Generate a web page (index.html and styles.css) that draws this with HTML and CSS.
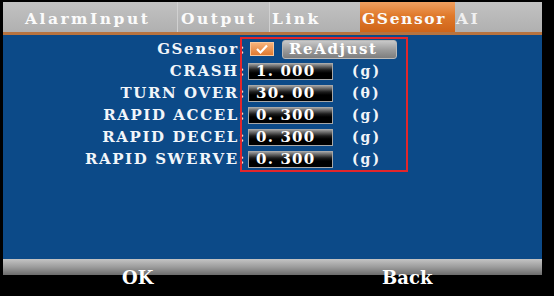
FILE: index.html
```html
<!DOCTYPE html>
<html lang="en">
<head>
    <meta charset="UTF-8">
    <title>GSensor</title>
    <link rel="stylesheet" href="styles.css">
</head>
<body>
    <div class="screen">
        <div class="tabs">
            <div class="tab tab-alarm">AlarmInput</div>
            <div class="tab tab-output">Output</div>
            <div class="tab tab-link">Link</div>
            <div class="tab tab-gsensor active">GSensor</div>
            <div class="tab tab-ai">AI</div>
        </div>

        <div class="panel">
            <div class="form">
                <div class="row">
                    <div class="label">GSensor:</div>
                    <div class="check">
                        <svg width="24" height="14" viewBox="0 0 24 14">
                            <path d="M7 7 L10.5 10.5 L17 3.5" fill="none" stroke="#fff" stroke-width="2.2"/>
                        </svg>
                    </div>
                    <div class="btn">ReAdjust</div>
                </div>
                <div class="row">
                    <div class="label">CRASH:</div>
                    <div class="field">1. 000</div>
                    <div class="unit">(g)</div>
                </div>
                <div class="row">
                    <div class="label">TURN OVER:</div>
                    <div class="field">30. 00</div>
                    <div class="unit">(θ)</div>
                </div>
                <div class="row">
                    <div class="label">RAPID ACCEL:</div>
                    <div class="field">0. 300</div>
                    <div class="unit">(g)</div>
                </div>
                <div class="row">
                    <div class="label">RAPID DECEL:</div>
                    <div class="field">0. 300</div>
                    <div class="unit">(g)</div>
                </div>
                <div class="row">
                    <div class="label">RAPID SWERVE:</div>
                    <div class="field">0. 300</div>
                    <div class="unit">(g)</div>
                </div>
            </div>
            <div class="highlight"></div>
        </div>

        <div class="footer">
            <div class="footer-btn">OK</div>
            <div class="footer-btn">Back</div>
        </div>
    </div>
</body>
</html>
```

FILE: styles.css
```css
* {
    margin: 0;
    padding: 0;
    box-sizing: border-box;
}

body {
    background: #000;
    width: 554px;
    height: 296px;
    overflow: hidden;
    font-family: 'DejaVu Serif', 'Liberation Serif', serif;
    font-weight: bold;
    color: #fff;
}

.screen {
    width: 539px;
    margin: 2px 0 0 3px;
}

/* top tab strip */
.tabs {
    display: flex;
    height: 33px;
    background: linear-gradient(#c2c2c2, #b0b0b0);
    border-bottom: 3px solid #b7733f;
}

.tab {
    font-size: 15.5px;
    letter-spacing: 2.5px;
    line-height: 30px;
    padding-top: 2px;
    color: #fbfbfb;
    white-space: nowrap;
    border-right: 1px solid #d0d0d0;
}

.tab-alarm {
    width: 175px;
    padding-left: 22px;
}

.tab-output {
    width: 92px;
    padding-left: 3px;
}

.tab-link {
    width: 90px;
    padding-left: 2px;
    border-right: none;
}

.tab-gsensor {
    width: 95px;
    padding-left: 2px;
    letter-spacing: 1.6px;
    border-right: none;
}

.tab-ai {
    flex: 1;
    padding-left: 1px;
    border-right: none;
    color: #f0f0f0;
}

.tab.active {
    background: linear-gradient(#f0a060 0%, #e07a2c 45%, #cf6418 100%);
}

/* blue body */
.panel {
    position: relative;
    height: 224px;
    background: #0c4a88;
}

.form {
    padding-top: 3px;
}

.row {
    display: flex;
    align-items: center;
    height: 22px;
}

.label {
    width: 243px;
    text-align: right;
    font-size: 15px;
    letter-spacing: 1.6px;
    color: #f2f6fa;
    white-space: nowrap;
}

.check {
    width: 24px;
    height: 14px;
    margin-left: 4px;
    background: linear-gradient(#f6b27a, #e07a30);
    border: 1px solid #f8c89c;
}

.check svg {
    display: block;
    margin: -1px 0 0 -1px;
}

.btn {
    width: 115px;
    height: 19px;
    margin-left: 8px;
    padding-left: 6px;
    border-radius: 3px;
    background: linear-gradient(#c8c8c8 0%, #9a9a9a 55%, #7e7e7e 100%);
    border: 1px solid #b8b8b8;
    font-size: 15px;
    letter-spacing: 1.6px;
    line-height: 17px;
    color: #fff;
}

.field {
    width: 85px;
    height: 17px;
    margin-left: 2px;
    padding-left: 7px;
    background: linear-gradient(#9a9a9a 0%, #1c1c1c 40%, #000 60%);
    border: 1px solid #a8a8a8;
    font-size: 15px;
    line-height: 15px;
    letter-spacing: 1.2px;
    color: #fff;
}

.unit {
    margin-left: 19px;
    font-size: 14px;
    letter-spacing: 2px;
    color: #f2f5f9;
}

.highlight {
    position: absolute;
    left: 237px;
    top: 2px;
    width: 168px;
    height: 135px;
    border: 2px solid #e3262b;
}

/* bottom soft keys */
.footer {
    display: flex;
    height: 37px;
    background: linear-gradient(#c4c4c4 0px, #9c9c9c 8px, #6c6c6c 16px, #000 16px);
}

.footer-btn {
    flex: 1;
    text-align: center;
    font-size: 18px;
    line-height: 20px;
    padding-top: 9px;
    color: #fff;
}
```
